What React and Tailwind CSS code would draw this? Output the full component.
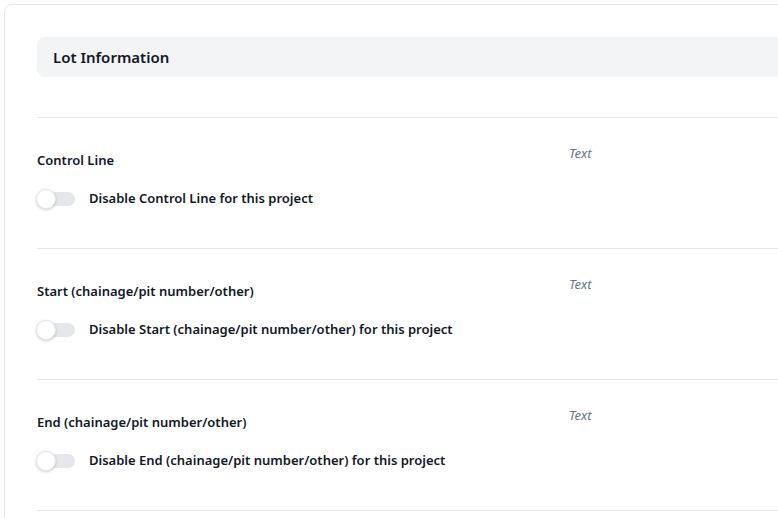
import { useState } from 'react';

const fields = [
  { label: 'Control Line' },
  { label: 'Start (chainage/pit number/other)' },
  { label: 'End (chainage/pit number/other)' },
];

const Toggle = ({ checked, onChange }) => (
  <button
    type="button"
    onClick={() => onChange(!checked)}
    className={`relative flex items-center w-[38px] h-[14px] rounded-full shrink-0 ${checked ? 'bg-[#3b82f6]' : 'bg-[#e5e7eb]'}`}
  >
    <span
      className={`absolute top-1/2 -translate-y-1/2 w-[20px] h-[20px] rounded-full bg-white border border-[#e5e7eb] shadow-[0_1px_3px_rgba(0,0,0,0.2)] ${checked ? 'left-[18px]' : 'left-[-1px]'}`}
    />
  </button>
);

const FieldRow = ({ field }) => {
  const [disabled, setDisabled] = useState(false);

  return (
    <div className="border-t border-[#e5e7eb] h-[131px] flex">
      <div className="w-[532px] shrink-0 pt-[34px]">
        <div className="text-[13px] font-semibold text-[#111827] leading-[16px]">
          {field.label}
        </div>
        <div className="flex items-center gap-[14px] mt-[21px]">
          <Toggle checked={disabled} onChange={setDisabled} />
          <span className="text-[13px] font-semibold text-[#111827]">
            Disable {field.label} for this project
          </span>
        </div>
      </div>
      <div className="pt-[27px] text-[13px] italic text-[#64748b] leading-[16px]">
        Text
      </div>
    </div>
  );
};

const App = () => {
  return (
    <div className="bg-white min-h-[518px] pt-[4px] pl-[4px] overflow-hidden" style={{ fontFamily: '"Noto Sans", sans-serif' }}>
      <div className="w-[1000px] border border-[#e5e7eb] rounded-lg bg-white px-8 pt-8 pb-8">
        <div className="h-[40px] bg-[#f3f4f6] rounded-lg flex items-center px-4 mb-10">
          <h2 className="text-[15px] font-semibold text-[#111827]">Lot Information</h2>
        </div>
        {fields.map((f) => (
          <FieldRow key={f.label} field={f} />
        ))}
        <div className="border-t border-[#e5e7eb]" />
      </div>
    </div>
  );
};

export default App;
